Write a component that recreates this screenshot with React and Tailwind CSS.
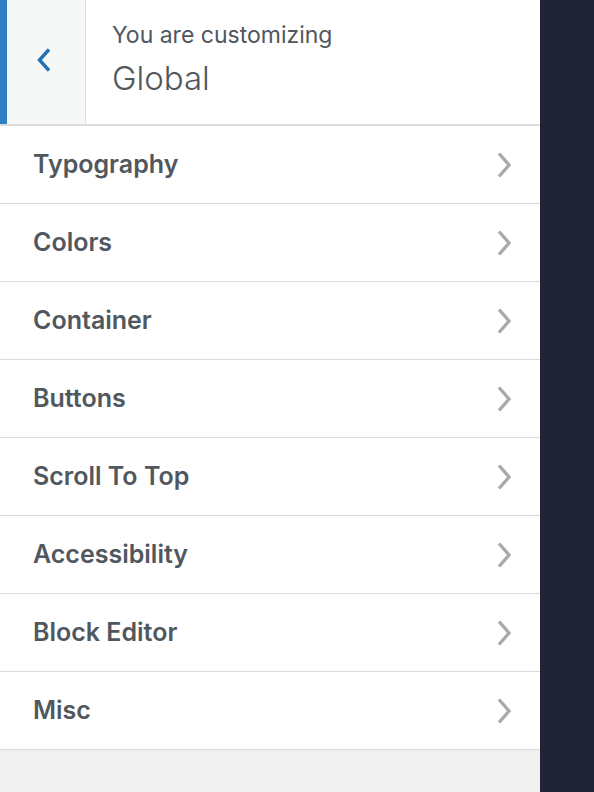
import React from "react";

const sections = [
  "Typography",
  "Colors",
  "Container",
  "Buttons",
  "Scroll To Top",
  "Accessibility",
  "Block Editor",
  "Misc",
];

const ChevronRight = () => (
  <svg width="14" height="28" viewBox="0 0 14 28" fill="none">
    <path d="M2 2.5 L12 14 L2 25.5" stroke="#a7aaad" strokeWidth="3.4" />
  </svg>
);

const ChevronLeft = () => (
  <svg width="14" height="26" viewBox="0 0 14 26" fill="none">
    <path d="M12 2.5 L2.5 13 L12 23.5" stroke="#2271b1" strokeWidth="3.4" />
  </svg>
);

const App = () => {
  return (
    <div
      className="flex h-[792px] w-[594px] bg-[#212437]"
      style={{ fontFamily: "Inter, 'Liberation Sans', sans-serif" }}
    >
      {/* Customizer panel */}
      <div className="flex w-[540px] flex-col bg-[#f0f0f1]">
        {/* Header */}
        <div className="flex h-[126px] border-b-2 border-[#dcdcde] bg-white">
          <div className="w-[7px] bg-[#2f7fc1]"></div>
          <button className="flex w-[79px] items-center justify-center border-r border-[#dcdcde] bg-[#f6f7f7] pb-[4px] pr-[4px]">
            <ChevronLeft />
          </button>
          <div className="flex flex-col pl-[26px] pt-[19px] text-[#50575e]">
            <span className="text-[23px] leading-[32px]">You are customizing</span>
            <span className="mt-[5px] text-[33px] font-light leading-[44px]">Global</span>
          </div>
        </div>

        {/* Sections */}
        <ul className="bg-white">
          {sections.map((name) => (
            <li
              key={name}
              className="flex h-[78px] items-center justify-between border-b border-[#dcdcde] pl-[33px] pr-[29px]"
            >
              <span className="text-[25px] font-semibold text-[#50575e]">{name}</span>
              <ChevronRight />
            </li>
          ))}
        </ul>
      </div>
    </div>
  );
};

export default App;
